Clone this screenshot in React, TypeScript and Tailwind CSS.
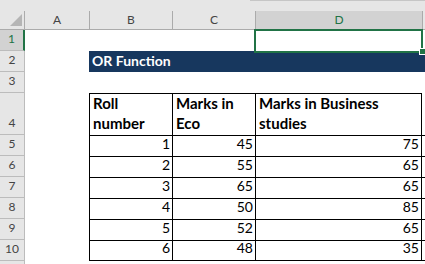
import type { ReactNode } from 'react';

const hdr = 'bg-[#e6e6e6] text-[#444] text-[12px] flex items-center justify-center';
const rowHdr = 'bg-[#e6e6e6] text-[#444] text-[12px] flex items-end justify-center pb-[2px] border-r border-b border-[#bcbcbc]';
const tcell = 'border-l border-t border-black flex items-end text-[14px] text-black pb-[2px] leading-[20px]';

const rows = [
  [1, 45, 75],
  [2, 55, 65],
  [3, 65, 65],
  [4, 50, 85],
  [5, 52, 65],
  [6, 48, 35]
];

function RowHead({ n, selected }: { n?: number; selected?: boolean }) {
  if (selected)
    return (
      <div className="bg-[#d2d2d2] text-[#217346] text-[12px] flex items-end justify-center pb-[2px] border-b border-[#bcbcbc] border-r-2 border-r-[#217346]">
        {n}
      </div>
    );
  return <div className={rowHdr}>{n}</div>;
}

function Blank({ children }: { children?: ReactNode }) {
  return <div>{children}</div>;
}

export default function App() {
  return (
    <div className="w-[425px] h-[264px] overflow-hidden bg-white font-['Lato',sans-serif] relative">
      <div className="h-[11px] bg-[#e6e6e6] flex">
        <div className="w-[250px]" />
        <div className="flex-1 border-t border-[#c6c6c6]" />
      </div>
      <div className="grid grid-cols-[25px_64px_83px_83px_167px_40px] grid-rows-[19px_21px_21px_21px_42px_repeat(7,21px)]">
        {/* column headers */}
        <div className="bg-[#e6e6e6] border-r border-b border-[#ababab] relative">
          <svg className="absolute left-[10px] top-[3px]" width="13" height="13" viewBox="0 0 13 13">
            <polygon points="0,12 12,12 12,0" fill="#b5b5b5" />
          </svg>
        </div>
        <div className={`${hdr} border-b border-[#ababab]`}>A</div>
        <div className={`${hdr} border-l border-b border-[#ababab]`}>B</div>
        <div className={`${hdr} border-l border-b border-[#ababab]`}>C</div>
        <div className="bg-[#d2d2d2] text-[#217346] text-[12px] flex items-center justify-center border-l border-b border-[#ababab]">D</div>
        <div className={`${hdr} border-l border-b border-[#ababab]`} />

        {/* row 1 */}
        <RowHead n={1} selected />
        <Blank />
        <Blank />
        <Blank />
        <div className="relative">
          <div className="absolute left-[-1px] top-[-1px] w-[169px] h-[24px] border-2 border-[#217346] z-10" />
          <div className="absolute left-[164px] top-[18px] w-[7px] h-[7px] bg-[#217346] border border-white z-20" />
        </div>
        <Blank />

        {/* row 2 */}
        <RowHead n={2} />
        <Blank />
        <div className="bg-[#17375e] flex items-end pl-[3px] pb-[2px]">
          <span className="text-white font-bold text-[14px] whitespace-nowrap leading-[18px]">OR Function</span>
        </div>
        <div className="bg-[#17375e]" />
        <div className="bg-[#17375e]" />
        <div className="bg-[#17375e]" />

        {/* row 3 */}
        <RowHead n={3} />
        <Blank />
        <Blank />
        <Blank />
        <Blank />
        <Blank />

        {/* row 4 */}
        <RowHead n={4} />
        <Blank />
        <div className={`${tcell} font-bold text-[15px] pl-[3px]`}>
          <span>Roll<br />number</span>
        </div>
        <div className={`${tcell} font-bold text-[15px] pl-[3px]`}>
          <span>Marks in<br />Eco</span>
        </div>
        <div className={`${tcell} font-bold text-[15px] pl-[3px] border-r`}>
          <span>Marks in Business<br />studies</span>
        </div>
        <Blank />

        {rows.map((r, i) => (
          <div key={r[0]} className="contents">
            <RowHead n={i + 5} />
            <Blank />
            <div className={`${tcell} justify-end pr-[2px] ${i === 5 ? 'border-b' : ''}`}>{r[0]}</div>
            <div className={`${tcell} justify-end pr-[2px] ${i === 5 ? 'border-b' : ''}`}>{r[1]}</div>
            <div className={`${tcell} justify-end pr-[2px] border-r ${i === 5 ? 'border-b' : ''}`}>{r[2]}</div>
            <div className={`border-t border-black ${i === 5 ? 'border-b' : ''}`} />
          </div>
        ))}

        {/* row 11 */}
        <RowHead />
      </div>
    </div>
  );
}
